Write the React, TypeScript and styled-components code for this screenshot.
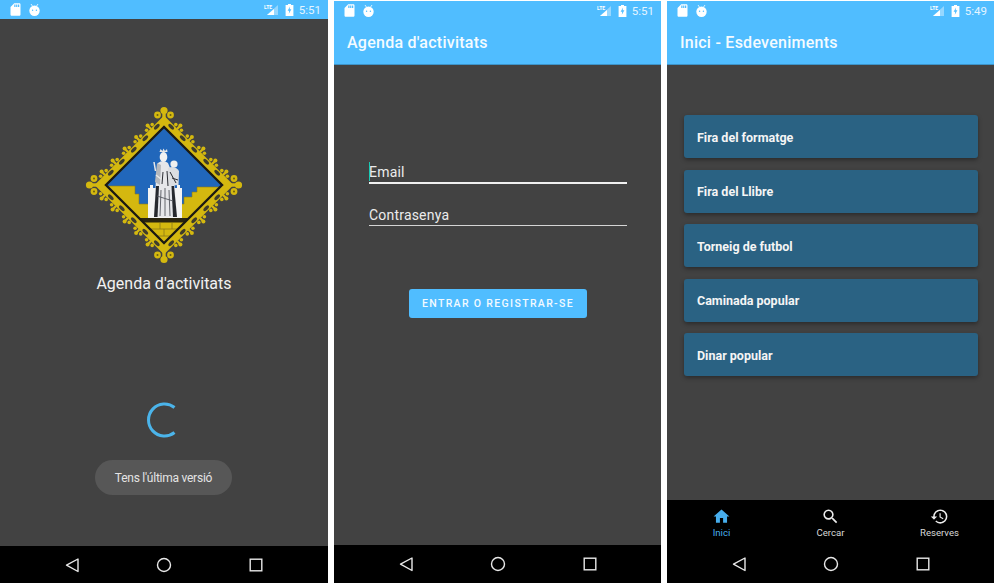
import * as React from "react";
import styled, { createGlobalStyle } from "styled-components";
import { MdHome, MdSearch, MdRestore, MdSdCard } from "react-icons/md";

const GlobalStyle = createGlobalStyle`
  html, body {
    margin: 0;
    padding: 0;
    background: #ffffff;
    font-family: Roboto, "Liberation Sans", sans-serif;
    overflow: hidden;
  }
`;

const Page = styled.div`
  display: flex;
  gap: 6px;
  width: 994px;
  height: 583px;
`;

// the second and third shots sit one pixel lower and narrower than the first
const Phone = styled.div<{ $inset?: boolean }>`
  display: flex;
  flex-direction: column;
  width: ${({ $inset }) => ($inset ? "327px" : "328px")};
  height: ${({ $inset }) => ($inset ? "582px" : "583px")};
  margin-top: ${({ $inset }) => ($inset ? "1px" : "0")};
  background: #424242;
  overflow: hidden;
  color: #ffffff;
`;

const Status = styled.div`
  display: flex;
  align-items: center;
  height: 19px;
  flex: none;
  padding: 0 7px 0 8px;
  background: #50bdff;
  color: #ffffff;
`;

const StatusLeft = styled.div`
  display: flex;
  align-items: center;
  gap: 5px;
  flex: 1;
`;

const StatusRight = styled.div`
  display: flex;
  align-items: center;
  gap: 6px;
`;

const Clock = styled.span`
  font-size: 11.5px;
  opacity: 0.85;
  margin-left: -1px;
`;

const AppBar = styled.div`
  display: flex;
  align-items: center;
  height: 45px;
  flex: none;
  padding: 1px 0 0 13px;
  box-sizing: border-box;
  background: #50bdff;
  border-bottom: 1px solid #3d94c9;
  font-size: 16px;
  font-weight: 500;
  letter-spacing: 0.25px;
  color: #f4fbff;
`;

const Body = styled.div`
  flex: 1;
  display: flex;
  flex-direction: column;
  min-height: 0;
`;

const SplashBody = styled(Body)`
  align-items: center;
  padding-top: 86px;
`;

const Crest = styled.svg`
  width: 160px;
  height: 160px;
  flex: none;
`;

const SplashTitle = styled.div`
  margin-top: 9px;
  font-size: 16px;
  line-height: 20px;
  color: #f2f2f2;
`;

const Spinner = styled.svg`
  margin: 108px 2px 0 0;
  width: 36px;
  height: 36px;
  flex: none;
`;

const Toast = styled.div`
  margin: 22px 1px 0 0;
  width: 137px;
  height: 35px;
  border-radius: 18px;
  background: #575757;
  display: flex;
  align-items: center;
  justify-content: center;
  font-size: 12px;
  letter-spacing: -0.25px;
  color: #e4e4e4;
`;

const LoginBody = styled(Body)`
  padding: 95px 34px 0 35px;
`;

const Field = styled.div<{ $focused?: boolean }>`
  position: relative;
  height: 22px;
  margin-bottom: ${({ $focused }) => ($focused ? "19px" : "63px")};
  border-bottom: ${({ $focused }) => ($focused ? "2px solid #f0f0f0" : "1px solid #d5d5d5")};
  font-size: 14px;
  line-height: 24px;
  letter-spacing: 0.2px;
  color: #ececec;
`;

const Caret = styled.span`
  position: absolute;
  left: 0;
  top: 2px;
  width: 1px;
  height: 19px;
  background: #19c9b4;
`;

const SubmitButton = styled.button`
  align-self: center;
  width: 178px;
  height: 29px;
  border: 0;
  padding: 0;
  border-radius: 3px;
  background: #50bdff;
  color: #f2faff;
  font-family: inherit;
  font-size: 10.5px;
  font-weight: 500;
  letter-spacing: 1.35px;
`;

const EventList = styled(Body)`
  padding: 50px 16px 0 17px;
  gap: 11.5px;
`;

const EventCard = styled.div`
  display: flex;
  align-items: center;
  height: 43px;
  flex: none;
  padding: 1px 0 0 13px;
  box-sizing: border-box;
  border-radius: 3px;
  background: #2a6283;
  box-shadow: 0 2px 4px rgba(0, 0, 0, 0.35);
  font-size: 12.5px;
  font-weight: 700;
  color: #f5f5f5;
`;

const Tabs = styled.div`
  display: flex;
  height: 45px;
  flex: none;
  background: #000000;
`;

const Tab = styled.div<{ $active?: boolean }>`
  flex: 1;
  display: flex;
  flex-direction: column;
  align-items: center;
  padding-top: 7px;
  gap: 1px;
  font-size: 9.6px;
  line-height: 12px;
  color: ${({ $active }) => ($active ? "#47aeed" : "#d8d8d8")};
`;

const NavBar = styled.div<{ $tall?: boolean }>`
  display: flex;
  align-items: center;
  justify-content: center;
  gap: 76px;
  height: ${({ $tall }) => ($tall ? "38px" : "37px")};
  flex: none;
  background: #000000;
`;

const NavIcon = styled.svg`
  width: 16px;
  height: 16px;
`;

const AndroidIcon = () => (
  <svg width="13" height="14" viewBox="0 0 13 14">
    <path d="M3 1 L4.4 3 M10 1 L8.6 3" stroke="#fff" strokeWidth="0.8" />
    <ellipse cx="6.5" cy="7.7" rx="5.2" ry="5.2" fill="#fff" />
    <circle cx="4.6" cy="7.2" r="0.7" fill="#50bdff" />
    <circle cx="8.4" cy="7.2" r="0.7" fill="#50bdff" />
  </svg>
);

const SignalIcon = () => (
  <svg width="15" height="12" viewBox="0 0 15 12">
    <path d="M14 1 V11 H3 Z" fill="#fff" fillOpacity="0.4" />
    <path d="M10 5 V11 H3 Z" fill="#fff" />
    <text x="0" y="5" fontSize="5" fontWeight="700" fill="#fff" fontFamily="Roboto, sans-serif">
      LTE
    </text>
  </svg>
);

const BatteryIcon = () => (
  <svg width="9" height="12" viewBox="0 0 9 12">
    <path d="M3 0 H6 V1 H8.4 V12 H0.6 V1 H3 Z" fill="#fff" />
    <path d="M5 2.5 L2.6 6.8 H4.2 L3.8 9.8 L6.4 5.2 H4.7 Z" fill="#50bdff" />
  </svg>
);

const StatusBar = ({ time }: { time: string }) => (
  <Status>
    <StatusLeft>
      <MdSdCard size={15} color="#fff" />
      <AndroidIcon />
    </StatusLeft>
    <StatusRight>
      <SignalIcon />
      <BatteryIcon />
      <Clock>{time}</Clock>
    </StatusRight>
  </Status>
);

const SystemNav = ({ tall }: { tall?: boolean }) => (
  <NavBar $tall={tall}>
    <NavIcon viewBox="0 0 16 16">
      <path d="M14 2 V14.5 L2.5 8.2 Z" fill="none" stroke="#e8e8e8" strokeWidth="1.4" strokeLinejoin="round" />
    </NavIcon>
    <NavIcon viewBox="0 0 16 16">
      <circle cx="8" cy="8" r="6.5" fill="none" stroke="#e8e8e8" strokeWidth="1.4" />
    </NavIcon>
    <NavIcon viewBox="0 0 16 16">
      <rect x="2.2" y="2.2" width="11.6" height="11.6" fill="none" stroke="#e8e8e8" strokeWidth="1.4" />
    </NavIcon>
  </NavBar>
);

// crest centre, the svg viewBox below uses page coordinates
const CX = 164;
const CY = 185;
const GOLD = "#d4b80f";
const edges: [number, number][] = [
  [1, -1],
  [1, 1],
  [-1, 1],
  [-1, -1],
];

// dx of each fleur along an edge, measured from the vertical axis
const steps = [13, 24.5, 36, 48, 59];

const Fleur = ({ x, y, sx, sy }: { x: number; y: number; sx: number; sy: number }) => (
  <g fill={GOLD}>
    <line x1={x} y1={y} x2={x + sx * 3} y2={y + sy * 3} stroke={GOLD} strokeWidth="2.4" />
    <circle cx={x + sx * 3.4} cy={y + sy * 3.4} r="2" />
    <circle cx={x + sx * 1.6 + sx * 2.8} cy={y + sy * 1.6 - sy * 2.8} r="1.8" />
    <circle cx={x + sx * 1.6 - sx * 2.8} cy={y + sy * 1.6 + sy * 2.8} r="1.8" />
  </g>
);

const Finial = ({ dx, dy }: { dx: number; dy: number }) => {
  const x = CX + dx * 60;
  const y = CY + dy * 60;
  return (
    <g fill={GOLD}>
      <line x1={x} y1={y} x2={x + dx * 14} y2={y + dy * 14} stroke={GOLD} strokeWidth="3.4" />
      <circle cx={x + dx * 14.5} cy={y + dy * 14.5} r="3.6" />
      <circle cx={x + dx * 10 + dy * 6.5} cy={y + dy * 10 + dx * 6.5} r="3.4" />
      <circle cx={x + dx * 10 - dy * 6.5} cy={y + dy * 10 - dx * 6.5} r="3.4" />
      <circle cx={x + dx * 10 + dy * 6.5} cy={y + dy * 10 + dx * 6.5} r="1" fill="#6b5e10" />
      <circle cx={x + dx * 10 - dy * 6.5} cy={y + dy * 10 - dx * 6.5} r="1" fill="#6b5e10" />
    </g>
  );
};

const CrestArt = () => {
  const diamond = (r: number) => `${CX},${CY - r} ${CX + r},${CY} ${CX},${CY + r} ${CX - r},${CY}`;
  const fleurs: React.ReactNode[] = [];
  const holes: React.ReactNode[] = [];
  edges.forEach(([sx, sy], i) => {
    steps.forEach((dx, k) => {
      const fx = CX + sx * dx;
      const fy = CY + sy * (69 - dx);
      fleurs.push(<Fleur key={`${i}-${k}`} x={fx} y={fy} sx={sx} sy={sy} />);
      const hx = CX + sx * (dx - 5.8);
      const hy = CY + sy * (65.5 - dx + 5.8);
      holes.push(
        <ellipse
          key={`h${i}-${k}`}
          cx={hx}
          cy={hy}
          rx="3.6"
          ry="1.7"
          fill="#3f3d2c"
          transform={`rotate(${sx * sy > 0 ? -45 : 45} ${hx} ${hy})`}
        />
      );
    });
  });
  return (
    <Crest viewBox="84 105 160 160">
      <defs>
        <clipPath id="inner">
          <polygon points={diamond(58)} />
        </clipPath>
      </defs>
      {fleurs}
      <Finial dx={0} dy={-1} />
      <Finial dx={1} dy={0} />
      <Finial dx={0} dy={1} />
      <Finial dx={-1} dy={0} />
      <polygon points={diamond(64.5)} fill="none" stroke={GOLD} strokeWidth="7" />
      {holes}
      <polygon points={diamond(58)} fill="#2167bb" />
      <g clipPath="url(#inner)">
        <path
          d="M100 250 V186 H135 V194 H139 V204 H184 V197 H192 V192 H197 V187 H230 V250 Z"
          fill={GOLD}
          stroke="#8a7a18"
          strokeWidth="0.6"
        />
        <rect x="100" y="218" width="130" height="4.5" fill="#2a2510" />
        <path
          d="M140 229 H188 M150 236 H178 M160 223 V229 M172 223 V229 M164 229 V236"
          stroke="#8a7a18"
          strokeWidth="0.8"
        />
      </g>
      <polygon points={diamond(58)} fill="none" stroke="#1c1a10" strokeWidth="2.2" />
      <rect x="148" y="188" width="34" height="30" fill="#f4f4f4" />
      <rect x="150" y="185" width="3" height="3" fill="#f4f4f4" />
      <rect x="177" y="185" width="3" height="3" fill="#f4f4f4" />
      {/* seated figure with the child */}
      <path d="M158 163 Q163 159 168 163 L174 178 L177 217 H154 L156 178 Z" fill="#e6e7ea" />
      <path d="M154 217 L156 186 L159 186 L157.5 217 Z" fill="#26282d" />
      <path d="M177 217 L174 186 L171.5 186 L173 217 Z" fill="#26282d" />
      <path
        d="M161 190 L160 216 M165 188 V216 M169 190 L170 216 M157 196 L173 201"
        stroke="#55585f"
        strokeWidth="0.9"
        fill="none"
      />
      <path d="M157 163 L155 182 L160 185 L161 165 Z" fill="#b4b7bc" />
      <ellipse cx="163.5" cy="157" rx="3.8" ry="5" fill="#f2f2f2" />
      <path d="M159.5 152 L160.5 149 L162.5 151 L163.5 148.5 L165 151 L167 149 L167.5 152 Z" fill="#e6e6e6" />
      <path d="M168 168 Q175 165 179 171 L178.5 185 L167 186 Z" fill="#dcdee1" />
      <path d="M170 172 L176 183 M163 172 L162 184 M167 171 L168 186 M172 178 L178 180" stroke="#2b2d33" strokeWidth="1" />
      <circle cx="174" cy="164" r="3.6" fill="#efefef" />
      <path d="M155.5 171 L154 162 M156 175 L161 179" stroke="#e8e8e8" strokeWidth="1.5" />
    </Crest>
  );
};

const App = () => {
  return (
    <Page>
      <GlobalStyle />
      <Phone>
        <StatusBar time="5:51" />
        <SplashBody>
          <CrestArt />
          <SplashTitle>Agenda d'activitats</SplashTitle>
          <Spinner viewBox="0 0 36 36">
            <path d="M29.5 5.5 A16 16 0 1 0 29.5 30.5" fill="none" stroke="#4bb4ea" strokeWidth="3" />
          </Spinner>
          <Toast>Tens l'última versió</Toast>
        </SplashBody>
        <SystemNav />
      </Phone>
      <Phone $inset>
        <StatusBar time="5:51" />
        <AppBar>Agenda d'activitats</AppBar>
        <LoginBody>
          <Field $focused>
            <Caret />
            Email
          </Field>
          <Field>Contrasenya</Field>
          <SubmitButton>ENTRAR O REGISTRAR-SE</SubmitButton>
        </LoginBody>
        <SystemNav tall />
      </Phone>
      <Phone $inset>
        <StatusBar time="5:49" />
        <AppBar>Inici - Esdeveniments</AppBar>
        <EventList>
          <EventCard>Fira del formatge</EventCard>
          <EventCard>Fira del Llibre</EventCard>
          <EventCard>Torneig de futbol</EventCard>
          <EventCard>Caminada popular</EventCard>
          <EventCard>Dinar popular</EventCard>
        </EventList>
        <Tabs>
          <Tab $active>
            <MdHome size={19} color="#47aeed" />
            Inici
          </Tab>
          <Tab>
            <MdSearch size={19} color="#ececec" />
            Cercar
          </Tab>
          <Tab>
            <MdRestore size={19} color="#ececec" />
            Reserves
          </Tab>
        </Tabs>
        <SystemNav tall />
      </Phone>
    </Page>
  );
};

export default App;
